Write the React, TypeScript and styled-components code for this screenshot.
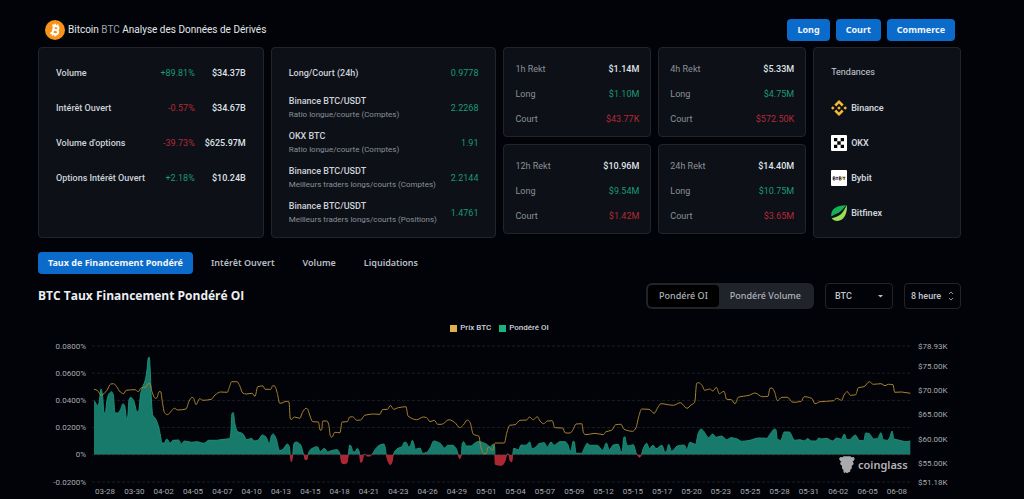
import React from "react";
import styled, { createGlobalStyle, css } from "styled-components";

const colors = {
  page: "#010308",
  card: "#0d1017",
  border: "#212529",
  blue: "#0b6bcb",
  text: "#cdd3da",
  muted: "#8a9097",
  up: "#1a9a76",
  down: "#b42a37",
};

const GlobalStyle = createGlobalStyle`
  *, *::before, *::after { box-sizing: border-box; }
  body {
    margin: 0;
    background: ${colors.page};
    color: ${colors.text};
    font-family: Roboto, "Liberation Sans", sans-serif;
    font-size: 9px;
    line-height: 14px;
  }
  button, select { font: inherit; color: inherit; }
`;

const Page = styled.main`
  padding: 19px 63px 0 38px;
`;

const Header = styled.header`
  display: flex;
  align-items: center;
  justify-content: space-between;
  height: 22px;
  margin-bottom: 6px;
  padding: 0 6px 0 7px;
`;

const Brand = styled.h1`
  display: flex;
  align-items: center;
  gap: 3px;
  margin: 0;
  font: 400 10px/20px Roboto, sans-serif;
  color: #e4e7ea;

  span { color: #9ba1a8; }
`;

const Actions = styled.div`
  display: flex;
  gap: 6px;
`;

const Button = styled.button<{ $quiet?: boolean }>`
  height: 22px;
  padding: 0 10px;
  border: 0;
  border-radius: 4px;
  background: ${(p) => (p.$quiet ? "transparent" : colors.blue)};
  color: ${(p) => (p.$quiet ? "#b9bfc6" : "#f2f6fb")};
  font-family: "Noto Sans", sans-serif;
  font-weight: ${(p) => (p.$quiet ? 600 : 700)};
  white-space: nowrap;
  cursor: pointer;
`;

const Cards = styled.section`
  display: grid;
  grid-template-columns: 226fr 226fr 303fr 148fr;
  gap: 7px;
  margin-bottom: 14px;
`;

const Card = styled.article`
  min-width: 0;
  padding: 7px 17px;
  border: 1px solid ${colors.border};
  border-radius: 4px;
  background: ${colors.card};
`;

const RektGrid = styled.div`
  display: grid;
  grid-template-columns: 1fr 1fr;
  gap: 7px;
  align-content: start;
`;

const RektCard = styled(Card)`
  padding: 8px 11px 5px;
`;

const Table = styled.table<{ $row: number }>`
  width: 100%;
  border-collapse: collapse;

  tr { height: ${(p) => p.$row}px; }
`;

const Label = styled.th<{ $muted?: boolean }>`
  padding: 0;
  text-align: left;
  white-space: nowrap;
  font-weight: ${(p) => (p.$muted ? 400 : 500)};
  color: ${(p) => (p.$muted ? colors.muted : colors.text)};
`;

const Caption = styled.small`
  display: block;
  font-size: 8px;
  font-weight: 400;
  color: ${colors.muted};
`;

type Tone = "up" | "down" | "plain";

const Value = styled.td<{ $tone: Tone; $wide?: boolean }>`
  padding: 0;
  text-align: right;
  color: ${(p) => (p.$tone === "plain" ? "#dfe3e8" : colors[p.$tone])};
  font-weight: ${(p) => (p.$tone === "plain" ? 500 : 400)};
  ${(p) => p.$wide && css`width: 51px;`}
`;

const TrendTitle = styled.h2`
  margin: 0;
  font-size: 9px;
  font-weight: 400;
  line-height: 35px;
`;

const TrendList = styled.ul`
  margin: 0;
  padding: 0;
  list-style: none;
`;

const TrendLink = styled.a`
  display: flex;
  align-items: center;
  gap: 4px;
  height: 35px;
  color: ${colors.text};
  font-weight: 600;
  text-decoration: none;
`;

const Tabs = styled.nav`
  display: flex;
  gap: 8px;
  margin-bottom: 9px;
`;

const ChartHeader = styled.div`
  display: flex;
  align-items: center;
  height: 26px;
  margin-bottom: 12px;
`;

const ChartTitle = styled.h2`
  flex: 1;
  margin: 0;
  font: 700 12px/26px "Open Sans", sans-serif;
  color: #eceff2;
`;

const Segmented = styled.div`
  display: flex;
  height: 26px;
  padding: 2px;
  border-radius: 6px;
  background: #202329;
`;

const Segment = styled.button<{ $on?: boolean }>`
  padding: 0 11px;
  border: 0;
  border-radius: 4px;
  background: ${(p) => (p.$on ? "#000" : "transparent")};
  color: #aeb4bb;
  font-family: "Noto Sans", sans-serif;
  font-weight: 500;
  cursor: pointer;
`;

const Picker = styled.label<{ $width: number; $pad: number }>`
  position: relative;
  width: ${(p) => p.$width}px;
  margin-left: 11px;

  select {
    width: 100%;
    height: 26px;
    padding: 0 ${(p) => p.$pad}px;
    appearance: none;
    border: 1px solid ${colors.border};
    border-radius: 4px;
    background: transparent;
    color: #c0c6cd;
    font-weight: 500;
  }

  svg {
    position: absolute;
    top: 8px;
    right: 7px;
    pointer-events: none;
  }
`;

const Legend = styled.div`
  display: flex;
  justify-content: center;
  gap: 8px;
  height: 14px;
  margin-bottom: 3px;
  font-size: 8px;
  font-weight: 500;
`;

const LegendItem = styled.span<{ $color: string }>`
  display: flex;
  align-items: center;
  gap: 3px;

  &::before {
    content: "";
    width: 7px;
    height: 7px;
    background: ${(p) => p.$color};
  }
`;

const ChartSvg = styled.svg`
  display: block;
  width: 100%;
  height: auto;

  text {
    font: 8px Roboto, sans-serif;
    fill: #a8acb0;
    dominant-baseline: central;
  }
  text.watermark {
    font: 600 11px "Noto Sans", sans-serif;
    fill: #b4b4b6;
  }
`;

function BitcoinLogo() {
  return (
    <svg width="20" height="20" viewBox="0 0 20 20" aria-hidden="true">
      <circle cx="10" cy="10" r="10" fill="#f7931a" />
      <g transform="rotate(14 10 10)" fill="none" stroke="#fff">
        <path d="M6.200 6h4.600c2.800 0 2.800 3.800 0 3.800H8.200h3c3.100 0 3.100 4.300 0 4.300H6.200M8.200 6v8" strokeWidth="2" />
        <path d="M8.900 3.800v2.200M11.400 3.800v2.200M8.900 14v2.200M11.400 14v2.200" strokeWidth="1.400" />
      </g>
    </svg>
  );
}

function BinanceLogo() {
  return (
    <svg width="16" height="16" viewBox="0 0 16 16" fill="#f3ba2f" aria-hidden="true">
      <path d="M8 0l4.600 4.600-1.800 1.800L8 3.600 5.200 6.400 3.400 4.600zM1.800 6.200L3.600 8 1.800 9.800 0 8zM14.200 6.200L16 8l-1.800 1.800L12.400 8zM8 6.200L9.800 8 8 9.800 6.200 8zM3.400 11.400l1.800-1.800L8 12.400l2.800-2.800 1.800 1.800L8 16z" />
    </svg>
  );
}

function OkxLogo() {
  return (
    <svg width="16" height="16" viewBox="0 0 16 16" aria-hidden="true">
      <rect width="16" height="16" rx="1" fill="#fff" />
      <path d="M3 3h3.300v3.300H3zM9.700 3H13v3.300H9.700zM6.300 6.300h3.400v3.400H6.300zM3 9.700h3.300V13H3zM9.700 9.700H13V13H9.700z" fill="#000" />
    </svg>
  );
}

function BybitLogo() {
  return (
    <svg width="16" height="16" viewBox="0 0 16 16" fill="none" strokeWidth="0.9" aria-hidden="true">
      <rect width="16" height="16" rx="1" fill="#fff" />
      <path d="M2.200 6.800v3.200h1.400c1 0 1-1.600 0-1.600H2.200h1.200c.9 0 .9-1.600 0-1.600zM5 6.800l1 1.600 1-1.600M6 8.400V10M8.200 6.800V10h1.400c1 0 1-1.600 0-1.600H8.200h1.200c.9 0 .9-1.600 0-1.600zM11.800 7.300h2.600M13.100 7.300V10" stroke="#26272b" />
      <path d="M11.200 6.200v3" stroke="#f7a600" />
    </svg>
  );
}

function BitfinexLogo() {
  return (
    <svg width="16" height="16" viewBox="0 0 16 16" aria-hidden="true">
      <path d="M.3 11.500C-.6 4.600 5 .1 15.900.3 14.200 1 12.500 3.500 10.500 5.600 7.500 8.700 3.600 9.400.3 11.500z" fill="#16b157" />
      <path d="M15.900.3c.6 8.200-3.100 15.600-9.400 15.600-2.600 0-4.500-1-5.700-2.700C5.400 12 9.400 10.400 12 6.700 13.600 4.500 14.700 2 15.900.3z" fill="#97e054" />
    </svg>
  );
}

const overview: [string, string, Tone, string][] = [
  ["Volume", "+89.81%", "up", "$34.37B"],
  ["Intérêt Ouvert", "-0.57%", "down", "$34.67B"],
  ["Volume d'options", "-39.73%", "down", "$625.97M"],
  ["Options Intérêt Ouvert", "+2.18%", "up", "$10.24B"],
];

const ratios: [string, string, string][] = [
  ["Long/Court (24h)", "", "0.9778"],
  ["Binance BTC/USDT", "Ratio longue/courte (Comptes)", "2.2268"],
  ["OKX BTC", "Ratio longue/courte (Comptes)", "1.91"],
  ["Binance BTC/USDT", "Meilleurs traders longs/courts (Comptes)", "2.2144"],
  ["Binance BTC/USDT", "Meilleurs traders longs/courts (Positions)", "1.4761"],
];

const rekt = [
  ["1h Rekt", "$1.14M", "$1.10M", "$43.77K"],
  ["4h Rekt", "$5.33M", "$4.75M", "$572.50K"],
  ["12h Rekt", "$10.96M", "$9.54M", "$1.42M"],
  ["24h Rekt", "$14.40M", "$10.75M", "$3.65M"],
];

const trends = [
  { name: "Binance", Logo: BinanceLogo },
  { name: "OKX", Logo: OkxLogo },
  { name: "Bybit", Logo: BybitLogo },
  { name: "Bitfinex", Logo: BitfinexLogo },
];

const rates = ["0.0800%", "0.0600%", "0.0400%", "0.0200%", "0%", "-0.0200%"];
const prices: [string, number][] = [
  ["$78.93K", 346], ["$75.00K", 366], ["$70.00K", 390], ["$65.00K", 414],
  ["$60.00K", 439], ["$55.00K", 463], ["$51.18K", 482],
];
const dates =
  "03-28 03-30 04-02 04-05 04-07 04-10 04-13 04-15 04-18 04-21 04-23 04-26 04-29 05-01 05-04 05-07 05-09 05-12 05-15 05-17 05-20 05-23 05-25 05-28 05-31 06-02 06-05 06-08".split(" ");

const ZERO = 454.7;

const fundingSeries = `94,401 97.7,405.7 99,403 101,389 102.5,395 104,413 105.3,413 107,400 109.3,393.3 111.7,391.7 113.3,395 115,413 117.7,413 120.3,410 123,403.7 124.7,405.7 126.7,419.7 127.7,417 129,400 130.7,397.3 133.7,400.7 137,411.7 138.7,411 140.7,393.3 142.7,386.7 145.3,380 147,370 148.3,357.7 149.3,357.3 150.3,371.7 151.3,398 152.7,415 155.3,418.3 158.3,425.7 160.7,436.7 162,443 164.3,443 166.7,439 170.3,443 173,440.3 178.7,440 181.3,444 184.3,441 191.7,442.3 196.7,441.7 204,443.3 208.7,440.3 216.7,440.3 223.3,439.3 229.3,438.7 230.7,435 232,413.3 233.3,412.7 235,424.3 237.3,431.3 242.7,433.7 247,439.7 251.7,438.3 254,441 258.3,440 262.3,434.9 266,437 269.3,443.5 271.7,435 273.3,434 276,438.3 279.7,450.7 282.3,449.7 287.7,444 289.3,446.7 290.3,454.7 291.3,461.7 292.7,454.7 294,443.3 296.3,442 300.7,445 303.3,453.3 304,454.7 305.3,459.7 306.7,459.7 308,454.7 310.3,449.7 317.3,446.7 320.3,451.7 324.3,448.3 327.7,452 332.3,450.3 337.3,449.7 339.3,452.3 340.3,454.7 341.7,462.7 344.3,463.7 347,462.7 348.3,454.7 349.7,445 351,446 353,451.7 355,451.9 357.3,448.3 358.7,450 359.7,454.7 360.7,462.3 362,461.7 363.7,454.7 365.3,454.3 366.7,456 370,456 372.3,454 376,448.3 380,445 384,444 385,446.7 386.3,454.7 388.3,461.7 390.3,464.7 391.7,462.7 393.3,454.7 395,451 398,448.3 402,446.7 404.3,442.3 406,442.3 408.7,447 410.7,445 412.3,440.3 413.7,443.3 415.3,449.3 420,448 422.7,453.3 426.7,452.3 430.3,447.7 433.7,441 440,443.3 445,448.3 447.3,445.3 453,445.3 456.3,449 458.3,454.7 459.7,458.7 461.3,454.7 462.3,443.3 463.7,441.7 466,446 471,446 474,443.7 478.3,441.5 486.7,444.3 490,447 493.3,444 494.7,446.7 494.9,454.7 495.3,464.3 501.7,465.3 504.7,461.7 506.7,454.7 507.7,453.7 509,455 510.3,461 511.7,461.7 512.7,454.7 513.7,448.3 516.7,449.3 518.7,449.7 521,445 526,445.3 529.7,442 532,448.7 535,447.7 539,443.7 544.3,442.7 547.3,447 551,442 554,445.3 560,441.7 565,441.7 567.7,444.3 570,451 571.3,450 573,441.3 574.3,441.7 576,453.3 581.7,453.3 584.3,448.3 587.3,443.3 590,445.3 597.3,445.3 602.7,450.3 606.3,443 609.3,449.7 613.3,445 618.3,444.3 621,451.7 622.3,451 623.7,437.7 625,436.7 626.3,443.3 628,446 633.3,444.7 636.3,453.3 637.7,455.3 639.3,457.3 641.3,455 643.3,448.3 646.7,443.3 649.3,448.7 653,445.3 656,448.7 662,445.3 665,452.3 666.7,451 668.7,444.3 671.7,451.3 677.3,446 684.3,445 686.7,449.3 690,442.3 695.7,444.3 698,434 701,429 703.3,430.7 708.7,437.7 712.7,434 716.3,437.3 721.7,436 726.7,439.7 731,437.7 737.3,439 741.7,441.3 750,440.3 758.3,438 766.7,438.3 771,432.7 774.7,429 776,429.7 777.3,439.3 780.7,440.3 784.3,432 789.3,432 794.7,440.3 800,439.7 804,441 807.7,438.7 811.7,441 816,441 818.7,438 821.7,439 826.7,438.3 832.3,441 836.7,438 841.3,439.3 844.3,434 846.7,439.3 849.3,439.7 855.3,435 859.3,440.3 863.7,440.7 865.7,433 869.3,433.7 873.7,439 877.3,438.7 881,432.7 883.3,439.7 887.7,440.3 890,436.7 892,431 894,439 898.3,440 906.7,441.7 910.3,441`;

const priceSeries = `94,389.3 97.7,390.7 101,395.3 106.7,390.7 110.7,384 113.7,383.7 116.7,386.7 120.3,392 123.7,393.7 126,390.3 135,389.7 138.3,391.7 141,388 146,387 148,383.7 150,383.7 152,391.7 155.3,398.3 157,397.7 159,391.7 160.7,391.7 162.3,401.7 164.7,413 167.7,414.7 171,411.3 174.3,408.3 177.7,410 186,409 189,401.3 192,397.3 193.7,398.3 196,404.7 199.7,398.7 203,400.3 211.3,399.3 215,395 220.7,392 227.3,392.3 229,388.3 231.7,381.7 237,381.7 239.7,385.7 242.7,393 246,394 252,393.3 255,396.3 257.7,386.7 263,385.9 265,389.3 270.7,389.3 272.7,385.7 274.7,386 277.3,393.3 279.7,403.3 282,403 286,401.3 289,402 290.3,419 291.7,419.3 294.3,417 300,418.3 302.3,412.7 306,408.3 307.3,408.7 310,416 312.7,421.7 318.3,422 320.3,430.3 321.7,429.7 322.7,421 326.7,421 328.7,424.3 330.3,435.7 332,437.3 334.7,432.3 340,432.7 342,422 347.3,421.7 349.7,417 352.7,416.7 356.7,420.3 360.7,420 364.7,415.3 373.3,414 380,414.3 382.3,409.7 387.7,409.3 390.3,405.3 393.7,409.3 398.3,407.7 406,406.7 408,416 416.7,419.7 423.3,417 426.7,417.7 430,421.7 434.3,420.3 437.7,424.3 441.7,424.3 449,419.7 455,422.7 459.7,427.7 463.3,425 467.3,420 470,422.3 473.3,434.3 479,436.3 480.7,446.7 484,453.7 486,453.7 488.3,447 492.7,450.3 495.3,443 504.3,443 506.7,433.3 509.7,425.3 515,424.7 520,420.3 526.7,420 529.3,417 533.3,419.7 537.3,416.7 540,421 543.7,423.7 547.3,421 552.3,420.7 554.7,427.7 562.7,428 565.3,433 570,433 573,429.7 576,424 581.7,423.7 583.7,433.3 586,434.7 595,433.3 603.3,434.7 606,431.7 611.7,430.3 615.7,424.7 621,424.3 624,429.3 632.7,431.3 636,427.7 638.7,416.7 641.7,409 649,409.3 654.3,413.3 657.3,408.3 661,403.7 673.3,405.3 680.3,402.7 687,408.3 691,405 694.7,402.3 696.7,383.3 698.7,382.7 702,385.3 704.7,390.3 709.7,389 713,391 716.3,387.3 719.3,393.7 724,391.3 726.7,399.3 731.3,399.7 735,403.7 738.3,397.3 749,395.3 755,393 762.3,396.7 768,396.3 770,388.3 772,388 774.7,392.3 777.3,400.7 782,397.3 787.3,397.3 793,402.3 801.3,401.3 804,396.7 811.7,398.3 815,403.7 820,401.7 833.3,400.8 836.7,398.3 841.7,400.3 844,395 847.3,391.7 850.3,395.3 855.7,394.7 858.3,387.7 864,386.7 869.3,381.7 873.3,384.3 881,383.7 885,385.7 888.3,384.3 893,384.7 894.7,392.3 901.7,392 910.3,393.3`;

/** Joins the points with a cubic curve that never overshoots a peak. */
function smoothPath(series: string) {
  const pts = series.split(" ").map((p) => p.split(",").map(Number));
  const slope = (i: number) => (pts[i + 1][1] - pts[i][1]) / (pts[i + 1][0] - pts[i][0]);
  const tangents = pts.map((_, i) => {
    if (i === 0 || i === pts.length - 1) return 0;
    const a = slope(i - 1);
    const b = slope(i);
    return a * b <= 0 ? 0 : (2 * a * b) / (a + b);
  });
  let d = `M${pts[0][0]} ${pts[0][1]}`;
  for (let i = 0; i < pts.length - 1; i++) {
    const [x0, y0] = pts[i];
    const [x1, y1] = pts[i + 1];
    const h = (x1 - x0) / 3;
    d += `C${x0 + h} ${y0 + tangents[i] * h} ${x1 - h} ${y1 - tangents[i + 1] * h} ${x1} ${y1}`;
  }
  return d;
}

function FundingChart() {
  const line = smoothPath(fundingSeries);
  const area = `${line}V${ZERO}H94Z`;
  return (
    <ChartSvg viewBox="38 338 923 161" role="img" aria-label="BTC Taux Financement Pondéré OI">
      <defs>
        <clipPath id="positive"><rect x="90" y="338" width="830" height={ZERO - 338} /></clipPath>
        <clipPath id="negative"><rect x="90" y={ZERO} width="830" height="30" /></clipPath>
      </defs>
      {rates.map((rate, i) => {
        const y = 346 + i * 27.2;
        return (
          <g key={rate}>
            <path d={`M92 ${y}H912`} stroke="#1b1e23" strokeDasharray="3 2" />
            <text x="86" y={y} textAnchor="end">{rate}</text>
          </g>
        );
      })}
      {prices.map(([price, y]) => <text key={price} x="918" y={y}>{price}</text>)}
      {dates.map((date, i) => (
        <text key={date} x={105 + i * 29.33} y="491" textAnchor="middle">{date}</text>
      ))}
      <g clipPath="url(#positive)">
        <path d={area} fill="#187a6a" />
        <path d={line} fill="none" stroke="#1c9079" />
      </g>
      <g clipPath="url(#negative)">
        <path d={area} fill="#ab2734" />
        <path d={line} fill="none" stroke="#c22c3b" />
      </g>
      <path d={smoothPath(priceSeries)} fill="none" stroke="#a9812f" />
      <path
        d="M840.500 457l2 .3 1-1.100h7l1 1.100 2-.3 1.300 1.600-1 2.200-1.300.6 1.200 1.600-.6 2-1.300.4v3.200l-1.600 1.200v2l-1.600.4-1.600 1-1.600-1-1.200 1-.8-1.600v-1.800l-1.400-1.200v-3.200l-1.300-.4-.6-2 1.200-1.600-1.300-.6-1-2.200z"
        fill="#aaaaad"
      />
      <text className="watermark" x="858" y="464">coinglass</text>
    </ChartSvg>
  );
}

export default function App() {
  return (
    <Page>
      <GlobalStyle />
      <Header>
        <Brand>
          <BitcoinLogo />
          <div>Bitcoin <span>BTC</span> Analyse des Données de Dérivés</div>
        </Brand>
        <Actions>
          <Button>Long</Button>
          <Button>Court</Button>
          <Button>Commerce</Button>
        </Actions>
      </Header>

      <Cards>
        <Card>
          <Table $row={35}>
            <tbody>
              {overview.map(([name, change, tone, value]) => (
                <tr key={name}>
                  <Label scope="row">{name}</Label>
                  <Value $tone={tone}>{change}</Value>
                  <Value $tone="plain" $wide>{value}</Value>
                </tr>
              ))}
            </tbody>
          </Table>
        </Card>
        <Card>
          <Table $row={35}>
            <tbody>
              {ratios.map(([name, caption, value]) => (
                <tr key={name + caption}>
                  <Label scope="row">
                    {name}
                    {caption && <Caption>{caption}</Caption>}
                  </Label>
                  <Value $tone="up">{value}</Value>
                </tr>
              ))}
            </tbody>
          </Table>
        </Card>
        <RektGrid>
          {rekt.map(([name, total, long, short]) => (
            <RektCard key={name}>
              <Table $row={25}>
                <tbody>
                  <tr><Label scope="row" $muted>{name}</Label><Value $tone="plain">{total}</Value></tr>
                  <tr><Label scope="row" $muted>Long</Label><Value $tone="up">{long}</Value></tr>
                  <tr><Label scope="row" $muted>Court</Label><Value $tone="down">{short}</Value></tr>
                </tbody>
              </Table>
            </RektCard>
          ))}
        </RektGrid>
        <Card>
          <TrendTitle>Tendances</TrendTitle>
          <TrendList>
            {trends.map(({ name, Logo }) => (
              <li key={name}><TrendLink href="#"><Logo />{name}</TrendLink></li>
            ))}
          </TrendList>
        </Card>
      </Cards>

      <Tabs>
        <Button>Taux de Financement Pondéré</Button>
        <Button $quiet>Intérêt Ouvert</Button>
        <Button $quiet>Volume</Button>
        <Button $quiet>Liquidations</Button>
      </Tabs>

      <ChartHeader>
        <ChartTitle>BTC Taux Financement Pondéré OI</ChartTitle>
        <Segmented>
          <Segment $on>Pondéré OI</Segment>
          <Segment>Pondéré Volume</Segment>
        </Segmented>
        <Picker $width={68} $pad={9}>
          <select aria-label="Symbole"><option>BTC</option></select>
          <svg width="10" height="10" viewBox="0 0 10 10" aria-hidden="true">
            <path d="M2 4h5L4.500 6.500z" fill="#b9bec5" />
          </svg>
        </Picker>
        <Picker $width={57} $pad={6}>
          <select aria-label="Intervalle"><option>8 heure</option></select>
          <svg width="6" height="10" viewBox="0 0 6 10" fill="none" stroke="#8d9298" aria-hidden="true">
            <path d="M1 3l2-2 2 2M1 7l2 2 2-2" />
          </svg>
        </Picker>
      </ChartHeader>

      <Legend>
        <LegendItem $color="#e0b14a">Prix BTC</LegendItem>
        <LegendItem $color="#16b67f">Pondéré OI</LegendItem>
      </Legend>
      <FundingChart />
    </Page>
  );
}
